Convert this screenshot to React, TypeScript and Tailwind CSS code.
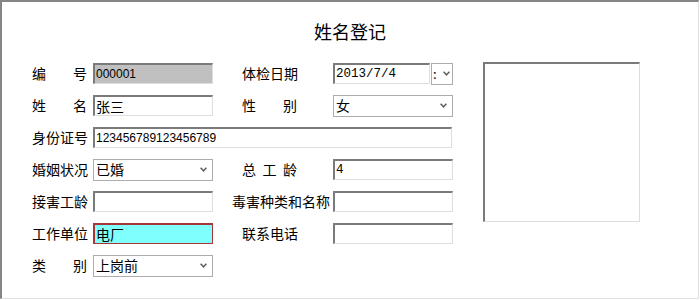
import React from "react";

// ─── Small pieces of the classic Win32 form ────────────────────────────────
const Chevron = () => (
  <svg width="7" height="5" viewBox="0 0 7 5" className="shrink-0">
    <path d="M0.6 0.8 L3.5 3.8 L6.4 0.8" fill="none" stroke="#606060" strokeWidth="1.5" />
  </svg>
);

function Label({ text, className = "" }: { text: string; className?: string }) {
  return (
    <div className={`flex justify-between w-[55px] shrink-0 text-[14px] leading-[21px] text-black ${className}`}>
      {[...text].map((c, i) => (
        <span key={i}>{c}</span>
      ))}
    </div>
  );
}

function TextBox({
  value = "",
  className = "",
}: {
  value?: string;
  className?: string;
}) {
  return (
    <div
      className={`h-[21px] shrink-0 border-t-2 border-l-2 border-r border-b border-t-[#7b7b7b] border-l-[#7b7b7b] border-r-[#dedede] border-b-[#dedede] pl-[1px] flex items-center overflow-hidden whitespace-nowrap text-black ${className}`}
    >
      {value}
    </div>
  );
}

function Select({ value, className = "" }: { value: string; className?: string }) {
  return (
    <div
      className={`h-[22px] shrink-0 border border-[#acacac] bg-white flex items-center justify-between pl-[2px] pr-[5px] text-[14px] text-black ${className}`}
    >
      <span>{value}</span>
      <Chevron />
    </div>
  );
}

const latin = "font-['Liberation_Sans',sans-serif] text-[12px]";
const mono = "font-['Liberation_Mono',monospace] text-[12.5px]";

export default function App() {
  return (
    <div className="w-[699px] h-[299px] bg-white border-t-2 border-l-2 border-t-[#858585] border-l-[#858585] border-r border-b border-r-[#e0e0e0] border-b-[#e0e0e0] font-['Noto_Sans_CJK_SC',sans-serif]">
      {/* ── Title ─────────────────────────────── */}
      <div className="h-[60px] pt-[17px] text-center text-[18px] leading-[24px] text-black">
        姓名登记
      </div>

      <div className="flex pl-[30px]">
        {/* ── Fields ───────────────────────────── */}
        <div className="flex flex-col gap-[11px] pt-[1px]">
          <div className="flex items-center h-[21px]">
            <Label text="编号" />
            <TextBox value="000001" className={`ml-[6px] w-[120px] bg-[#c0c0c0] ${latin}`} />
            <Label text="体检日期" className="ml-[29px]" />
            <TextBox value="2013/7/4" className={`ml-[36px] w-[97px] ${mono}`} />
            <div className="ml-[1px] w-[22px] h-[22px] border border-[#acacac] flex items-center justify-between pl-[1px] pr-[2px] text-[13px] text-black">
              <span className="leading-none">:</span>
              <Chevron />
            </div>
          </div>

          <div className="flex items-center h-[21px]">
            <Label text="姓名" />
            <TextBox value="张三" className="ml-[6px] w-[120px] text-[14px]" />
            <Label text="性别" className="ml-[29px]" />
            <Select value="女" className="ml-[36px] w-[120px]" />
          </div>

          <div className="flex items-center h-[21px]">
            <Label text="身份证号" />
            <TextBox value="123456789123456789" className={`ml-[6px] w-[359px] ${latin}`} />
          </div>

          <div className="flex items-center h-[21px]">
            <Label text="婚姻状况" />
            <Select value="已婚" className="ml-[6px] w-[120px]" />
            <Label text="总工龄" className="ml-[29px]" />
            <TextBox value="4" className={`ml-[36px] w-[120px] ${mono}`} />
          </div>

          <div className="flex items-center h-[21px]">
            <Label text="接害工龄" />
            <TextBox className="ml-[6px] w-[120px]" />
            <div className="ml-[19px] w-[98px] shrink-0 text-[14px] leading-[21px] text-black whitespace-nowrap">
              毒害种类和名称
            </div>
            <TextBox className="ml-[3px] w-[120px]" />
          </div>

          <div className="flex items-center h-[21px]">
            <Label text="工作单位" />
            <div className="ml-[6px] w-[120px] h-[21px] shrink-0 bg-[#80ffff] border-t-2 border-l-2 border-r border-b border-[#a8343a] pl-[1px] flex items-center text-[14px] text-black">
              电厂
            </div>
            <Label text="联系电话" className="ml-[29px]" />
            <TextBox className="ml-[36px] w-[120px]" />
          </div>

          <div className="flex items-center h-[21px]">
            <Label text="类别" />
            <Select value="上岗前" className="ml-[6px] w-[120px]" />
          </div>
        </div>

        {/* ── Photo box ─────────────────────────── */}
        <div className="ml-[30px] w-[157px] h-[160px] border-t-2 border-l-2 border-t-[#7b7b7b] border-l-[#7b7b7b] border-r border-b border-r-[#dedede] border-b-[#dedede]" />
      </div>
    </div>
  );
}
